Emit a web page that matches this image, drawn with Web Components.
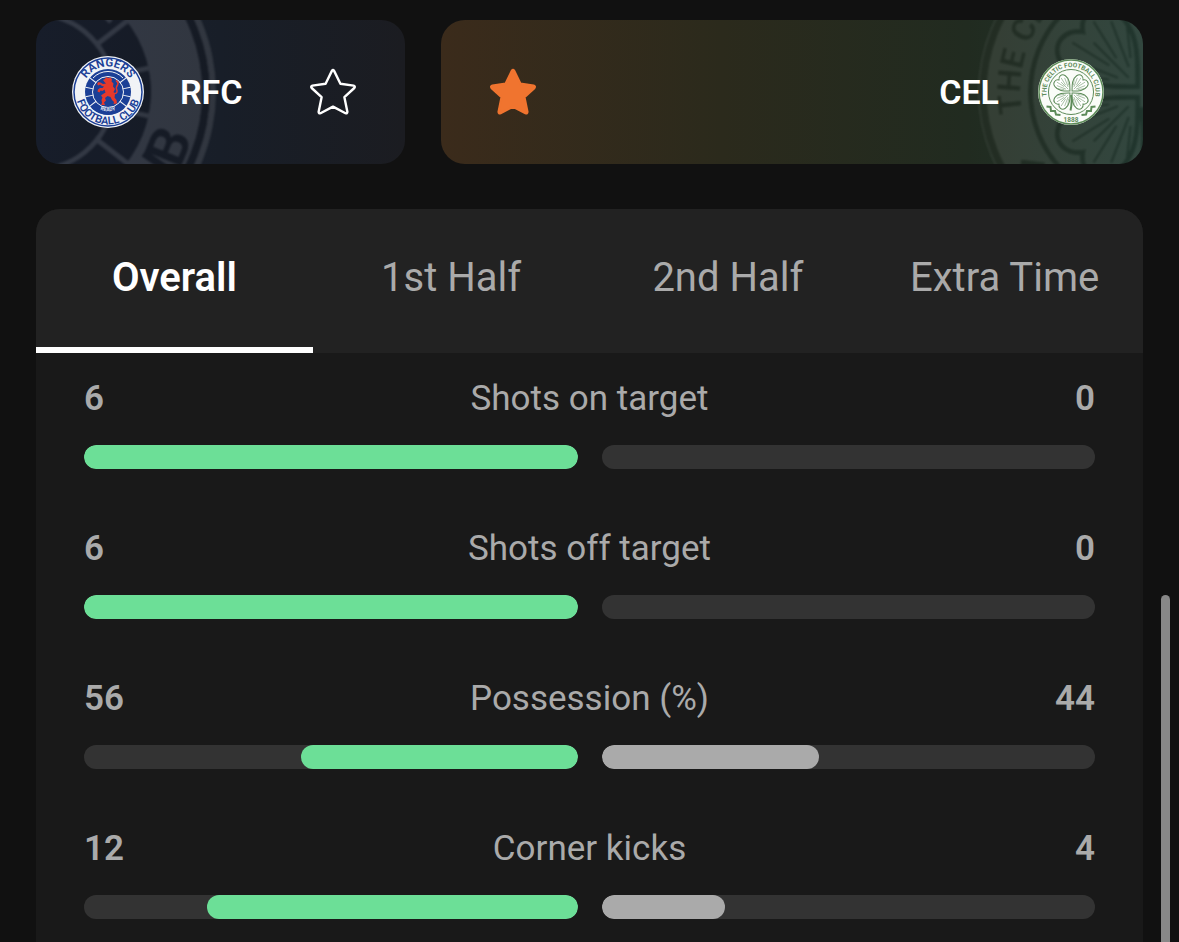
<!DOCTYPE html>
<html lang="en">
<head>
<meta charset="utf-8">
<meta name="viewport" content="width=device-width, initial-scale=1">
<title>Match statistics</title>
<style>
  body {
    margin: 0;
    background: #111;
    color: #aaa;
    font-family: Roboto, "Liberation Sans", sans-serif;
  }
</style>
</head>
<body>
<match-page>
  <team-vote slot="vote" team="RFC" crest="rangers"></team-vote>
  <team-vote slot="vote" team="CEL" crest="celtic" reverse voted></team-vote>
  <stats-panel>
    <stat-row label="Shots on target" home="6" away="0"></stat-row>
    <stat-row label="Shots off target" home="6" away="0"></stat-row>
    <stat-row label="Possession (%)" home="56" away="44"></stat-row>
    <stat-row label="Corner kicks" home="12" away="4"></stat-row>
  </stats-panel>
</match-page>

<script>
const lion = `
  <path d="M65 52L62 48L66 46L68 42L72 44L77 43L80 47L79 51L83 55L82 61L86 66L83 72L86 77L85 83L89 88L90 95L83 96L84 92L80 88L77 82L71 80L66 84L68 89L64 93L66 98L58 98L60 94L59 88L61 83L58 79L62 76L67 73L65 67L61 70L57 69L55 73L51 71L52 67L56 64L61 64L64 61L60 60L56 57L53 59L50 56L53 52L57 53L62 56L68 55Z"/>
  <path d="M83 75Q91 76 90 69Q87 63 91 58Q94 53 89 50" fill="none" stroke="#e5392b" stroke-width="3" stroke-linecap="round"/>`;

// White spokes cut the band round the shield into bricks
const spokes = [-38, -12, 12, 38, 142, 168, 192, 218]
  .map(a => `<path d="M102 72h16" transform="rotate(${a} 72 72)"/>`).join('');

const leaf = `
  <path d="M72 69C64 61 55 53 57 41c2-9 11-9 15-3 4-6 13-6 15 3 2 12-7 20-15 28z" fill="#fff" stroke-width="2"/>
  <path d="M72 64V44M69 61L61 43M75 61L83 43M70 55L66 38M74 55L78 38M66 59L58 49M78 59L86 49"/>`;

const crests = {
  rangers: {
    name: 'Rangers',
    art: `
      <circle cx="72" cy="72" r="72" fill="#f1f3f6"/>
      <circle cx="72" cy="72" r="68" fill="none" stroke="#1b3f96" stroke-width="3"/>
      <circle cx="72" cy="72" r="46" fill="#1b3f96"/>
      <g fill="none" stroke="#f1f3f6" stroke-width="2">
        <circle cx="72" cy="72" r="31"/>
        <path d="M42 44A41 41 0 0 1 102 44"/>
        ${spokes}
      </g>
      <path d="M42 97Q72 110 102 97L103 106Q72 129 41 106Z" fill="#1b3f96"/>
      <g fill="#e5392b">${lion}</g>
      <path id="r-top" d="M21 72A51 51 0 0 1 123 72" fill="none"/>
      <path id="r-bottom" d="M7 72A65 65 0 0 0 137 72" fill="none"/>
      <path id="r-ready" d="M38 93A42 42 0 0 0 106 93" fill="none"/>
      <g font-weight="600" text-anchor="middle">
        <text font-size="23" fill="#1b3f96"><textPath href="#r-top" startOffset="50%">RANGERS</textPath></text>
        <text font-size="22" fill="#1b3f96"><textPath href="#r-bottom" startOffset="50%">FOOTBALL CLUB</textPath></text>
        <text font-size="10" fill="#f1f3f6"><textPath href="#r-ready" startOffset="50%">READY</textPath></text>
      </g>`
  },
  celtic: {
    name: 'Celtic',
    art: `
      <circle cx="72" cy="72" r="66" fill="#fafcf8"/>
      <g fill="none" stroke="#5d8b59">
        <circle cx="72" cy="72" r="64" stroke-width="3"/>
        <circle cx="72" cy="72" r="45" stroke-width="2"/>
        <g stroke-width="1">
          <g transform="rotate(45 72 72)">${leaf}</g>
          <g transform="rotate(135 72 72)">${leaf}</g>
          <g transform="rotate(225 72 72)">${leaf}</g>
          <g transform="rotate(315 72 72)">${leaf}</g>
        </g>
        <path d="M72 78Q75 92 71 109" stroke-width="4"/>
        <path d="M23 101l8 1 1 8 8 0 2 7 9 1M121 101l-8 1-1 8-8 0-2 7-9 1" stroke-width="4"/>
      </g>
      <path id="c-top" d="M26 88A49 49 0 1 1 118 88" fill="none"/>
      <g font-weight="700" text-anchor="middle" fill="#5d8b59">
        <text font-size="13"><textPath href="#c-top" startOffset="50%">THE CELTIC FOOTBALL CLUB</textPath></text>
        <text x="72" y="131" font-size="13">1888</text>
      </g>`
  }
};

class ClubCrest extends HTMLElement {
  connectedCallback() {
    const crest = crests[this.getAttribute('club')];
    this.attachShadow({ mode: 'open' });
    this.shadowRoot.innerHTML = `
      <style>
        :host {
          display: block;
          width: 72px;
          height: 72px;
          flex: none;
        }
        svg {
          display: block;
          width: 100%;
          height: 100%;
        }
      </style>
      <svg viewBox="0 0 144 144" role="img" aria-label="${crest.name}">${crest.art}</svg>
    `;
  }
}
customElements.define('club-crest', ClubCrest);

class TeamVote extends HTMLElement {
  connectedCallback() {
    const team = this.getAttribute('team');
    const club = this.getAttribute('crest');
    this.attachShadow({ mode: 'open' });
    this.shadowRoot.innerHTML = `
      <style>
        :host {
          display: flex;
          align-items: center;
          gap: 36px;
          position: relative;
          overflow: hidden;
          box-sizing: border-box;
          padding: 36px;
          border-radius: 24px;
          background: linear-gradient(90deg, #1a2130, #181e28 50%, #1b1c21);
        }
        :host([reverse]) {
          flex-direction: row-reverse;
          background: linear-gradient(90deg, #3b2b1b, #2b2a1c 40%, #212b20 75%, #1e352c);
        }
        .watermark {
          position: absolute;
          top: -108px;
          left: -180px;
          width: 360px;
          height: 360px;
          opacity: 0.11;
          filter: grayscale(1) brightness(0.8) contrast(2.5) blur(1px);
        }
        :host([reverse]) .watermark {
          left: auto;
          right: -180px;
          opacity: 0.09;
        }
        club-crest, .team, button {
          position: relative;
        }
        club-crest.watermark {
          position: absolute;
        }
        .team {
          flex: 1;
          color: #fff;
          font-size: 34px;
          line-height: 40px;
          font-weight: 600;
        }
        :host([reverse]) .team {
          text-align: right;
        }
        button {
          display: grid;
          place-items: center;
          width: 72px;
          height: 72px;
          padding: 0;
          border: 0;
          background: none;
          cursor: pointer;
        }
        svg {
          width: 48px;
          height: 48px;
          fill: none;
          stroke: #fff;
          stroke-width: 2.4;
          stroke-linejoin: round;
        }
        :host([voted]) svg {
          fill: #f0742f;
          stroke: #f0742f;
        }
      </style>
      <club-crest class="watermark" club="${club}" aria-hidden="true"></club-crest>
      <club-crest club="${club}"></club-crest>
      <span class="team">${team}</span>
      <button type="button" aria-label="Vote for ${team}" aria-pressed="${this.hasAttribute('voted')}">
        <svg viewBox="0 0 48 48" aria-hidden="true">
          <path d="M22.9 2.9Q24 1.2 25.1 2.9L31.4 15.8L44.6 17.6Q46.6 18.3 45.3 20L35.4 29.2L38.4 43.9Q38.2 45.8 36.5 45.2L24 38.6L11.5 45.2Q9.8 45.8 9.6 43.9L12.6 29.2L2.7 20Q1.4 18.3 3.4 17.6L16.6 15.8Z"/>
        </svg>
      </button>
    `;
  }
}
customElements.define('team-vote', TeamVote);

class StatRow extends HTMLElement {
  connectedCallback() {
    const home = Number(this.getAttribute('home'));
    const away = Number(this.getAttribute('away'));
    const total = home + away || 1;
    this.attachShadow({ mode: 'open' });
    this.shadowRoot.innerHTML = `
      <style>
        :host {
          display: grid;
          gap: 26px;
        }
        .values {
          display: grid;
          grid-template-columns: 1fr auto 1fr;
          font-size: 35px;
          line-height: 40px;
        }
        .value {
          font-weight: 600;
        }
        .value:last-child {
          text-align: right;
        }
        .bars {
          display: grid;
          grid-template-columns: 1fr 1fr;
          gap: 24px;
        }
        .track {
          display: flex;
          height: 24px;
          border-radius: 12px;
          background: #333;
          overflow: hidden;
        }
        .track:first-child {
          justify-content: flex-end;
        }
        .fill {
          border-radius: 12px;
          background: #aaa;
        }
        .fill.leading {
          background: #6cdf97;
        }
      </style>
      <div class="values">
        <span class="value">${home}</span>
        <span>${this.getAttribute('label')}</span>
        <span class="value">${away}</span>
      </div>
      <div class="bars">
        <div class="track"><div class="fill ${home > away ? 'leading' : ''}" style="width: ${home / total * 100}%"></div></div>
        <div class="track"><div class="fill ${away > home ? 'leading' : ''}" style="width: ${away / total * 100}%"></div></div>
      </div>
    `;
  }
}
customElements.define('stat-row', StatRow);

class StatsPanel extends HTMLElement {
  connectedCallback() {
    this.attachShadow({ mode: 'open' });
    this.shadowRoot.innerHTML = `
      <style>
        :host {
          display: block;
          border-radius: 24px 24px 0 0;
          background: #191919;
          overflow: hidden;
        }
        nav {
          display: grid;
          grid-template-columns: repeat(4, 1fr);
          background: #222;
        }
        button {
          height: 144px;
          padding: 0;
          border: 0;
          border-bottom: 6px solid transparent;
          background: none;
          color: #aaa;
          font: inherit;
          font-size: 40px;
          line-height: 48px;
          cursor: pointer;
        }
        button[aria-selected="true"] {
          border-bottom-color: #fff;
          color: #fff;
          font-weight: 600;
        }
        .rows {
          display: grid;
          gap: 60px;
          padding: 26px 48px 22px;
        }
      </style>
      <nav role="tablist">
        <button type="button" role="tab" aria-selected="true">Overall</button>
        <button type="button" role="tab" aria-selected="false">1st Half</button>
        <button type="button" role="tab" aria-selected="false">2nd Half</button>
        <button type="button" role="tab" aria-selected="false">Extra Time</button>
      </nav>
      <div class="rows"><slot></slot></div>
    `;
    const tabs = this.shadowRoot.querySelectorAll('button');
    tabs.forEach(tab => tab.addEventListener('click', () => {
      tabs.forEach(t => t.setAttribute('aria-selected', t === tab));
    }));
  }
}
customElements.define('stats-panel', StatsPanel);

class MatchPage extends HTMLElement {
  connectedCallback() {
    this.attachShadow({ mode: 'open' });
    this.shadowRoot.innerHTML = `
      <style>
        :host {
          display: flex;
          flex-direction: column;
          gap: 45px;
          position: relative;
          box-sizing: border-box;
          min-height: 100vh;
          padding: 20px 36px 0;
          overflow: hidden;
        }
        .votes {
          display: grid;
          grid-template-columns: 369fr 702fr;
          gap: 36px;
        }
        ::slotted(stats-panel) {
          flex: 1;
        }
        .scroll-thumb {
          position: absolute;
          right: 9px;
          bottom: 0;
          width: 9px;
          height: 347px;
          border-radius: 5px 5px 0 0;
          background: #888;
        }
      </style>
      <div class="votes"><slot name="vote"></slot></div>
      <slot></slot>
      <div class="scroll-thumb"></div>
    `;
  }
}
customElements.define('match-page', MatchPage);
</script>
</body>
</html>
